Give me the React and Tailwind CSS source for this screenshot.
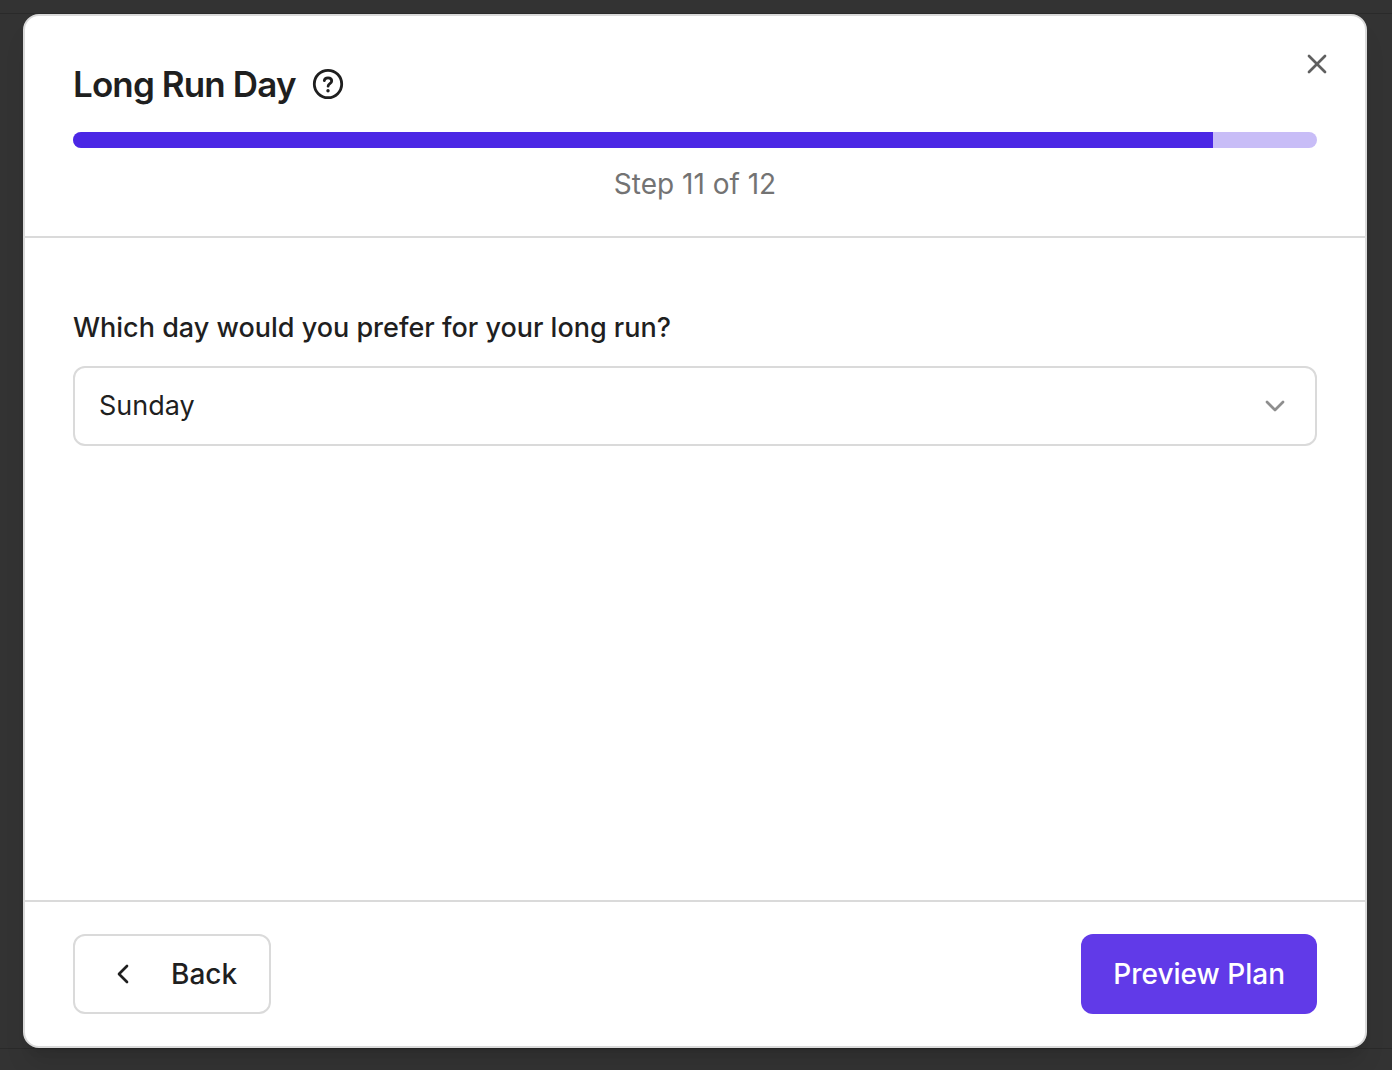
import React from "react";
import { X, ChevronDown, ChevronLeft } from "lucide-react";

const days = ["Monday", "Tuesday", "Wednesday", "Thursday", "Friday", "Saturday", "Sunday"];

function HelpIcon() {
  return (
    <svg viewBox="0 0 32 32" className="size-8" fill="none" stroke="currentColor" strokeWidth="2.8" strokeLinecap="round" aria-hidden="true">
      <circle cx="16" cy="16" r="13.7" />
      <path d="M12.3 12.7C12.5 10.9 14 9.9 16 9.9c2.1 0 3.7 1.2 3.7 3.1 0 2.7-3.5 2.7-3.6 5.2" />
      <circle cx="16" cy="22.8" r="1.7" fill="currentColor" stroke="none" />
    </svg>
  );
}

export default function App() {
  return (
    <div className="flex min-h-screen flex-col bg-[#333333] pt-[13px] pb-[21px] font-['Inter',sans-serif] text-[#1f1f1f]">
      <div className="flex flex-1 flex-col border-y border-[#2a2a2a] pr-[25px] pl-[23px]">
        <main className="relative flex flex-1 flex-col rounded-2xl border-2 border-[#dadada] bg-white shadow-xl">
          <header className="border-b-2 border-[#dadada] px-12 pt-12 pb-8">
            <div className="flex items-center gap-4">
              <h1 className="text-[35px] leading-10 font-semibold tracking-tight">Long Run Day</h1>
              <button type="button" aria-label="Help">
                <HelpIcon />
              </button>
            </div>
            <div className="mt-7 h-4 overflow-hidden rounded-full bg-[#c8bdf7]" role="progressbar" aria-label="Progress" aria-valuenow={11} aria-valuemax={12}>
              <div className="h-full bg-[#4b27e5]" style={{ width: `${(11 / 12) * 100}%` }} />
            </div>
            <p className="mt-4 text-center text-[28px] leading-10 text-[#737373]">Step 11 of 12</p>
          </header>
          <section className="flex-1 px-12 pt-[70px]">
            <label htmlFor="day" className="block text-[27px] leading-10 font-medium">
              Which day would you prefer for your long run?
            </label>
            <div className="relative mt-[18px]">
              <select id="day" defaultValue="Sunday" className="block h-20 w-full appearance-none rounded-xl border-2 border-[#dadada] bg-white px-6 text-[27px]">
                {days.map((d) => (
                  <option key={d}>{d}</option>
                ))}
              </select>
              <ChevronDown className="pointer-events-none absolute top-6 right-[26px] size-8 text-[#8e8e8e]" />
            </div>
          </section>
          <footer className="flex items-center justify-between border-t-2 border-[#dadada] px-12 py-8">
            <button type="button" className="flex h-20 items-center gap-8 rounded-xl border-2 border-[#dadada] px-8 text-[28px] font-medium">
              <ChevronLeft className="size-8" />
              Back
            </button>
            <button type="button" className="h-20 rounded-xl bg-[#613ae8] px-8 text-[28px] font-medium text-white">
              Preview Plan
            </button>
          </footer>
          <button type="button" aria-label="Close" className="absolute top-8 right-8 text-[#606060]">
            <X className="size-8" />
          </button>
        </main>
      </div>
    </div>
  );
}
